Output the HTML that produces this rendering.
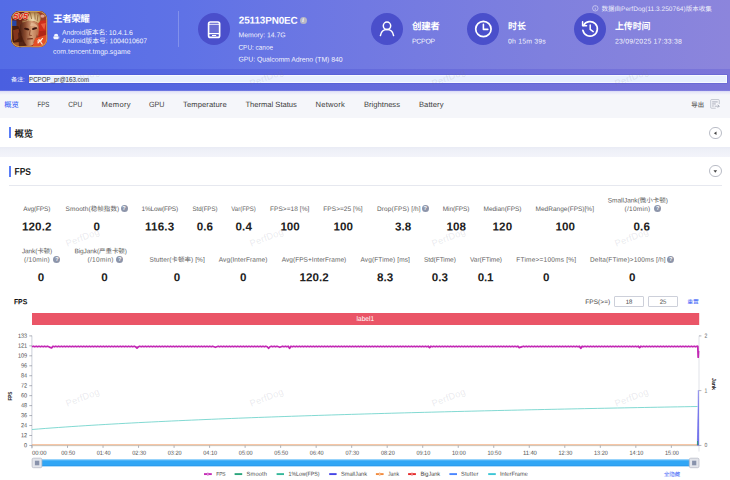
<!DOCTYPE html>
<html lang="zh-CN">
<head>
<meta charset="utf-8">
<title>PerfDog - 王者荣耀 性能报告</title>
<style>
*{box-sizing:border-box;margin:0;padding:0}
html,body{width:730px;height:480px;overflow:hidden;background:#fff}
body{position:relative;font-family:"Liberation Sans","Noto Sans CJK SC",sans-serif;-webkit-font-smoothing:antialiased}
.abs{position:absolute}
.t{position:absolute;white-space:nowrap;font-family:"Liberation Sans","Noto Sans CJK SC",sans-serif}
#hdr{left:0;top:0;width:730px;height:68.5px;background:linear-gradient(90deg,#546ce6 0%,#5f72e6 25%,#7179e2 50%,#7f80de 75%,#8c85dc 100%)}
#note{left:0;top:68.5px;width:730px;height:22px;background:linear-gradient(90deg,#4a5fe0 0%,#5466e0 25%,#646bdc 50%,#7070da 75%,#7b75d9 100%)}
#noteinput{left:28.6px;top:75px;width:698.4px;height:8.4px;background:#e8f0fe;border:.7px solid #f8faff;box-shadow:0 0 0 .5px rgba(70,80,205,.55)}
#tabs{left:0;top:90.5px;width:730px;height:27.3px;background:#f5f6fa}
#tabshadow{left:0;top:90.4px;width:730px;height:4.6px;background:linear-gradient(180deg,rgba(130,128,225,.5),rgba(180,180,240,.26) 35%,rgba(245,246,250,0))}
#card1{left:0;top:117.8px;width:730px;height:29.4px;background:#fff}
#gap{left:0;top:147.2px;width:730px;height:9.6px;background:linear-gradient(180deg,#e9ebf5 0%,#eff1f8 40%,#f3f4fa 100%)}
#card2{left:0;top:156.8px;width:730px;height:324px;background:#fff}
.bar{width:1.7px;height:11px;background:#587cf6;left:9.1px}
.circ{width:32px;height:32px;border-radius:50%;background:#4a4fcb}
.rbtn{width:12.6px;height:12.6px;border-radius:50%;border:.5px solid #b9bcc6;background:#fff;left:709.3px}
.q{width:7px;height:7px;border-radius:50%;background:#8d95aa;color:#fff;font-size:5.6px;line-height:7px;text-align:center;font-weight:700}
.inp{height:11.3px;width:29.7px;border:.6px solid #cdd0da;border-radius:1px;background:#fff;top:295.6px}
svg{position:absolute;overflow:visible}
</style>
</head>
<body>
<div class="abs" id="hdr"></div>
<div class="abs" id="note"></div>
<div class="abs" id="noteinput"></div>
<div class="abs" id="tabs"></div>
<div class="abs" id="tabshadow"></div>
<div class="abs" id="card1"></div>
<div class="abs" id="gap"></div>
<div class="abs" id="card2"></div>

<!-- game icon -->
<svg id="gameicon" style="left:11px;top:11px" width="36.3" height="36.3" viewBox="0 0 36 36">
  <defs>
    <clipPath id="gc"><rect x="0" y="0" width="36" height="36" rx="8.2"/></clipPath>
    <linearGradient id="gbg" x1="0" y1="0" x2="1" y2="1">
      <stop offset="0" stop-color="#5e2213"/><stop offset=".45" stop-color="#70301b"/><stop offset="1" stop-color="#c83d1d"/>
    </linearGradient>
    <linearGradient id="gface" x1="0" y1="0" x2="1" y2="0">
      <stop offset="0" stop-color="#4d2014"/><stop offset=".3" stop-color="#8e4e31"/><stop offset=".62" stop-color="#d6a079"/><stop offset="1" stop-color="#b56a46"/>
    </linearGradient>
    <radialGradient id="ghair" cx=".58" cy=".6" r=".62">
      <stop offset="0" stop-color="#f0dfb6"/><stop offset=".55" stop-color="#cfa870"/><stop offset="1" stop-color="#8c5e32"/>
    </radialGradient>
    <filter id="gblur" x="-20%" y="-20%" width="140%" height="140%"><feGaussianBlur stdDeviation=".55"/></filter>
  </defs>
  <g clip-path="url(#gc)">
    <rect width="36" height="36" fill="url(#gbg)"/>
    <g filter="url(#gblur)">
      <path d="M25 0 H36 V11 L27 12 Z" fill="#9c3e27"/>
      <ellipse cx="31.2" cy="5" rx="2.2" ry="1.6" fill="#dfa393"/>
      <path d="M26.5 10 L36 9 V24 L27 25 Z" fill="#cf2f1d"/>
      <path d="M29.5 13 L34.5 12 L33 18.5 Z" fill="#ea5d40"/>
      <path d="M28 20 L36 19 V25 L28 26 Z" fill="#b02617"/>
      <rect x="-1" y="8.4" width="6.4" height="6.4" fill="#2747a6"/>
      <path d="M-1 15 L7 15 L12 24 L10 37 L-1 37 Z" fill="#461a0c"/>
      <path d="M2 19 L7.5 17.5 L9.5 26 L3 30 Z" fill="#83351a"/>
      <path d="M1 31.5 L12 30.5 L14 36 L1 36 Z" fill="#a25626"/>
      <path d="M11.5 5 C13 -1 26 -2 29 4 C30 8 29 11 27 12.5 C23 8.5 16 9 12.5 14 C10.5 11 10.8 8 11.5 5 Z" fill="url(#ghair)"/>
      <path d="M14.5 3 L17 9.5 M19 1.5 L20.5 8 M23.5 1.5 L24 8.5 M26.6 4 L26 10" stroke="#8f6234" stroke-width=".8" fill="none"/>
      <path d="M9 14 C12 9 23 8 27 12.5 C28.5 18 27.5 25 24.5 30.5 C22.5 34.5 16.5 36 14 33.5 C10.5 29.5 8 20 9 14 Z" fill="url(#gface)"/>
      <path d="M20 12 C24 12 26.5 14 26.8 17 C24 15 21 14.5 19 15 Z" fill="#e6bc98" opacity=".75"/>
      <ellipse cx="15.6" cy="17.9" rx="2.7" ry="1.1" fill="#3a150c" transform="rotate(14 15.6 17.9)"/>
      <ellipse cx="23.4" cy="17.4" rx="2.7" ry="1.1" fill="#3a150c" transform="rotate(-16 23.4 17.4)"/>
      <path d="M19 19 L18.1 24 L20.6 24.4" stroke="#8a4629" stroke-width=".9" fill="none"/>
      <path d="M16 27.7 L21.6 27.4" stroke="#6a2a19" stroke-width="1" fill="none"/>
      <path d="M9.6 19 C10.6 26 13 31 15.5 34 L8 36 L7 22 Z" fill="#4a1c10" opacity=".85"/>
      <path d="M22 31 C23.5 29 25 26 25.6 23 L27.5 26 L24 33 Z" fill="#8a3a22" opacity=".7"/>
      <path d="M24 27 L37 23 V37 H21 Z" fill="#e44f28"/>
      <path d="M26.4 32 L31.6 27 M27.4 27.8 L31.2 33.2 M26 29.8 L30.4 29.4" stroke="#fff4e6" stroke-width="1.1" fill="none"/>
    </g>
    <path d="M0 0 H19 L15.6 9.4 H0 Z" fill="#741a10" opacity=".92"/>
    <text x="2.3" y="7.9" font-family="Liberation Sans, sans-serif" font-size="9" font-weight="700" font-style="italic" fill="#e3261a" stroke="#fff0c4" stroke-width=".85" paint-order="stroke" stroke-linejoin="round" letter-spacing="-.25">5v5</text>
    <rect x=".55" y=".55" width="34.9" height="34.9" rx="7.8" fill="none" stroke="#c99c50" stroke-width="1.1"/>
  </g>
</svg>

<!-- android glyph -->
<svg style="left:53.1px;top:32.8px" width="6.3" height="7.2" viewBox="0 0 16 16" preserveAspectRatio="none">
  <path d="M2.5 7 A5.5 5.5 0 0 1 13.5 7 Z M2.5 8 H13.5 V12.5 A1.2 1.2 0 0 1 12.3 13.7 H3.7 A1.2 1.2 0 0 1 2.5 12.5 Z M0.2 8 h1.6 v4.2 h-1.6 Z M14.2 8 h1.6 v4.2 h-1.6 Z" fill="#fff" opacity=".92"/>
</svg>
<div class="abs" style="left:177.6px;top:11px;width:.8px;height:36px;background:rgba(255,255,255,.22)"></div>

<!-- header circles -->
<div class="abs circ" style="left:197.5px;top:13px"></div>
<div class="abs circ" style="left:371px;top:13px"></div>
<div class="abs circ" style="left:466.8px;top:13px"></div>
<div class="abs circ" style="left:573.8px;top:13px"></div>
<svg style="left:197.5px;top:13px" width="32" height="32" viewBox="0 0 32 32" fill="none" stroke="#fff" stroke-width="1.5" stroke-linecap="round" stroke-linejoin="round">
  <rect x="10.6" y="9" width="11" height="15.4" rx="1.7" stroke-width="1.7"/>
  <rect x="11.6" y="11.6" width="9" height="8.6" fill="rgba(255,255,255,.18)" stroke="none"/>
  <path d="M10.8 11.3 H21.4 M10.8 20.6 H21.4" stroke-width="1.1"/>
  <path d="M14.4 22.5 H17.8" stroke-width="1"/>
</svg>
<svg style="left:371px;top:13px" width="32" height="32" viewBox="0 0 32 32" fill="none" stroke="#fff" stroke-width="1.5" stroke-linecap="round" stroke-linejoin="round">
  <circle cx="16" cy="12.8" r="3.7"/>
  <path d="M9.4 22.6 C10.2 18.2 13 16.6 16 16.6 C19 16.6 21.8 18.2 22.6 22.6"/>
</svg>
<svg style="left:466.8px;top:13px" width="32" height="32" viewBox="0 0 32 32" fill="none" stroke="#fff" stroke-width="1.5" stroke-linecap="round" stroke-linejoin="round">
  <circle cx="16.4" cy="16" r="7.7" stroke-width="1.7"/>
  <path d="M16.4 11.4 V16.4 H20.8" stroke-width="1.6"/>
</svg>
<svg style="left:573.8px;top:13px" width="32" height="32" viewBox="0 0 32 32" fill="none" stroke="#fff" stroke-width="1.5" stroke-linecap="round" stroke-linejoin="round">
  <path d="M9.6 12.4 A7.3 7.3 0 1 1 8.9 17.4" stroke-width="1.7"/>
  <path d="M8.6 8.8 V12.8 H12.6"/>
  <path d="M16.2 12 V16.4 L19.2 18.6"/>
</svg>
<!-- info icons -->
<div class="abs q" style="left:299.6px;top:16.9px;width:7px;height:7px;line-height:7px;font-size:5.6px;background:#b7b8c6;font-style:italic;font-family:'Liberation Serif',serif">i</div>
<svg style="left:592.2px;top:5.1px" width="6.6" height="6.6" viewBox="0 0 12 12" fill="none" stroke="rgba(255,255,255,.85)" stroke-width="1">
  <circle cx="6" cy="6" r="5"/><path d="M6 5.2 V9 M6 3 V3.9"/>
</svg>

<!-- export icon -->
<svg style="left:709.8px;top:99px" width="10.2" height="9.8" viewBox="0 0 20 19" fill="none" stroke="#a9aebb" stroke-width="1.3" stroke-linecap="round" stroke-linejoin="round">
  <path d="M10.5 18 H3 A1.6 1.6 0 0 1 1.4 16.4 V2.6 A1.6 1.6 0 0 1 3 1 H16.6 A1.6 1.6 0 0 1 18.2 2.6 V9"/>
  <path d="M5 5.6 H14.4 M5 9.6 H10.6 M5 13.6 H6.6" stroke="#7b8192" stroke-width="1.2"/>
  <path d="M10 14 H17.6 M15.6 11.6 L18 14 L15.6 16.4" stroke="#8a90a0" stroke-width="1.2"/>
</svg>

<!-- section titles -->
<div class="abs bar" style="top:127.2px"></div>
<div class="abs bar" style="top:165.6px"></div>
<div class="abs rbtn" style="top:126.5px"></div>
<div class="abs rbtn" style="top:164.6px"></div>
<svg style="left:709.3px;top:126.5px" width="12.6" height="12.6" viewBox="0 0 12.6 12.6"><path d="M7.5 4.5 V8.1 L4.9 6.3 Z" fill="#444"/></svg>
<svg style="left:709.3px;top:164.6px" width="12.6" height="12.6" viewBox="0 0 12.6 12.6"><path d="M4.5 5.2 H8.1 L6.3 7.8 Z" fill="#444"/></svg>
<div class="abs" style="left:9px;top:185.1px;width:713px;height:.7px;background:#e6e8ef"></div>

<!-- help icons -->
<div class="abs q" style="left:120.5px;top:205px">?</div>
<div class="abs q" style="left:421.8px;top:205px">?</div>
<div class="abs q" style="left:654.2px;top:204.9px">?</div>
<div class="abs q" style="left:53.4px;top:255.9px">?</div>
<div class="abs q" style="left:116.3px;top:255.9px">?</div>
<div class="abs q" style="left:667.3px;top:255.9px">?</div>

<!-- FPS threshold inputs -->
<div class="abs inp" style="left:614.1px"></div>
<div class="abs inp" style="left:648px"></div>

<!-- chart -->
<svg id="chart" style="left:0;top:0" width="730" height="480" viewBox="0 0 730 480">
  <rect x="32" y="313" width="667.2" height="12" fill="#ea5567"/>
  <!-- axes -->
  <g stroke="#ccd0da" stroke-width=".6" fill="none">
    <path d="M31.9 335.7 V448.6" stroke-width="1"/>
    <path d="M699 335.7 V451.5"/>
    <path d="M32 445.65 H699" stroke="#9aa39f" stroke-width=".6"/>
  </g>
  <g stroke="#7c818e" stroke-width=".6" fill="none" id="ticks"><path d="M29.3 445.45 H32 M29.3 435.49 H32 M29.3 425.53 H32 M29.3 415.57 H32 M29.3 405.61 H32 M29.3 395.65 H32 M29.3 385.69 H32 M29.3 375.73 H32 M29.3 365.77 H32 M29.3 355.81 H32 M29.3 345.85 H32 M29.3 335.89 H32 M32.00 445.6 V447.9 M67.52 445.6 V447.9 M103.04 445.6 V447.9 M138.56 445.6 V447.9 M174.08 445.6 V447.9 M209.60 445.6 V447.9 M245.12 445.6 V447.9 M280.64 445.6 V447.9 M316.16 445.6 V447.9 M351.68 445.6 V447.9 M387.20 445.6 V447.9 M422.72 445.6 V447.9 M458.24 445.6 V447.9 M493.76 445.6 V447.9 M529.28 445.6 V447.9 M564.80 445.6 V447.9 M600.32 445.6 V447.9 M635.84 445.6 V447.9 M671.36 445.6 V447.9 M699 335.90 H701.4 M699 390.60 H701.4 M699 445.45 H701.4"/></g>
  <!-- series -->
  <path id="low" d="M32.0 429.50 L38.7 428.97 L45.3 428.45 L52.0 427.95 L58.6 427.47 L65.3 427.01 L71.9 426.55 L78.6 426.11 L85.2 425.69 L91.9 425.27 L98.5 424.87 L105.2 424.47 L111.9 424.09 L118.5 423.71 L125.2 423.35 L131.8 422.99 L138.5 422.64 L145.1 422.30 L151.8 421.97 L158.4 421.65 L165.1 421.33 L171.8 421.01 L178.4 420.71 L185.1 420.41 L191.7 420.11 L198.4 419.83 L205.0 419.54 L211.7 419.27 L218.3 418.99 L225.0 418.73 L231.7 418.46 L238.3 418.20 L245.0 417.95 L251.6 417.70 L258.3 417.45 L264.9 417.21 L271.6 416.97 L278.2 416.74 L284.9 416.51 L291.5 416.28 L298.2 416.06 L304.9 415.84 L311.5 415.62 L318.2 415.40 L324.8 415.19 L331.5 414.98 L338.1 414.78 L344.8 414.57 L351.4 414.37 L358.1 414.18 L364.8 413.98 L371.4 413.79 L378.1 413.60 L384.7 413.41 L391.4 413.23 L398.0 413.04 L404.7 412.86 L411.3 412.68 L418.0 412.51 L424.6 412.33 L431.3 412.16 L438.0 411.99 L444.6 411.82 L451.3 411.65 L457.9 411.49 L464.6 411.32 L471.2 411.16 L477.9 411.00 L484.5 410.84 L491.2 410.69 L497.8 410.53 L504.5 410.38 L511.2 410.23 L517.8 410.08 L524.5 409.93 L531.1 409.78 L537.8 409.64 L544.4 409.49 L551.1 409.35 L557.7 409.21 L564.4 409.07 L571.1 408.93 L577.7 408.79 L584.4 408.65 L591.0 408.52 L597.7 408.38 L604.3 408.25 L611.0 408.12 L617.6 407.99 L624.3 407.86 L631.0 407.73 L637.6 407.60 L644.3 407.47 L650.9 407.35 L657.6 407.22 L664.2 407.10 L670.9 406.98 L677.5 406.86 L684.2 406.74 L690.8 406.62 L697.5 406.50" fill="none" stroke="#62cfc6" stroke-width=".8"/>
  <path d="M32 444.75 H698.6" stroke="#f29a62" stroke-width=".75" fill="none"/>
  <path d="M698.35 390.2 L697.3 445.3 L698.7 445.3 Z" fill="#4a4ae8" stroke="#4a4ae8" stroke-width=".35" stroke-linejoin="round"/>
  <path d="M697.4 445 L697.6 441 L697.9 445" stroke="#2a9d6f" stroke-width=".7" fill="none"/>
  <path id="fps" d="M32.0 346.75 L33.4 346.25 L34.8 346.75 L36.2 346.25 L37.6 346.75 L39.0 346.25 L40.4 346.75 L41.8 346.25 L43.2 346.75 L44.6 346.25 L46.0 346.75 L47.4 346.25 L48.8 346.75 L50.2 347.45 L51.6 347.95 L53.0 346.25 L54.4 346.75 L55.8 346.25 L57.2 346.75 L58.6 346.25 L60.0 346.75 L61.4 346.25 L62.8 346.75 L64.2 346.25 L65.6 346.75 L67.0 346.25 L68.4 346.75 L69.8 346.25 L71.2 346.75 L72.6 346.25 L74.0 346.75 L75.4 346.25 L76.8 346.75 L78.2 346.25 L79.6 346.75 L81.0 346.25 L82.4 346.75 L83.8 346.25 L85.2 346.75 L86.6 346.25 L88.0 346.75 L89.4 346.25 L90.8 346.75 L92.2 346.25 L93.6 346.75 L95.0 346.25 L96.4 346.75 L97.8 346.25 L99.2 346.75 L100.6 346.25 L102.0 346.75 L103.4 346.25 L104.8 346.75 L106.2 346.25 L107.6 346.75 L109.0 346.25 L110.4 346.75 L111.8 346.25 L113.2 346.75 L114.6 346.25 L116.0 346.75 L117.4 346.25 L118.8 346.75 L120.2 346.25 L121.6 346.75 L123.0 346.25 L124.4 346.75 L125.8 346.25 L127.2 346.75 L128.6 346.25 L130.0 346.75 L131.4 346.25 L132.8 346.75 L134.2 346.25 L135.6 346.75 L137.0 348.05 L138.4 346.75 L139.8 346.25 L141.2 346.75 L142.6 346.25 L144.0 346.75 L145.4 346.25 L146.8 346.75 L148.2 346.25 L149.6 346.75 L151.0 346.25 L152.4 346.75 L153.8 346.25 L155.2 346.75 L156.6 346.25 L158.0 346.75 L159.4 346.25 L160.8 346.75 L162.2 346.25 L163.6 346.75 L165.0 346.25 L166.4 346.75 L167.8 346.25 L169.2 346.75 L170.6 346.25 L172.0 346.75 L173.4 346.25 L174.8 346.75 L176.2 346.25 L177.6 346.75 L179.0 346.25 L180.4 346.75 L181.8 346.25 L183.2 346.75 L184.6 346.25 L186.0 346.75 L187.4 346.25 L188.8 346.75 L190.2 346.25 L191.6 346.75 L193.0 346.25 L194.4 346.75 L195.8 346.25 L197.2 346.75 L198.6 346.25 L200.0 346.75 L201.4 346.25 L202.8 346.75 L204.2 346.25 L205.6 346.75 L207.0 346.25 L208.4 346.75 L209.8 346.25 L211.2 346.75 L212.6 346.25 L214.0 346.75 L215.4 347.25 L216.8 346.75 L218.2 346.25 L219.6 346.75 L221.0 346.25 L222.4 346.75 L223.8 346.25 L225.2 346.75 L226.6 346.25 L228.0 346.75 L229.4 346.25 L230.8 346.75 L232.2 346.25 L233.6 346.75 L235.0 346.25 L236.4 346.75 L237.8 346.25 L239.2 346.75 L240.6 346.25 L242.0 346.75 L243.4 346.25 L244.8 346.75 L246.2 346.25 L247.6 346.75 L249.0 346.25 L250.4 346.75 L251.8 346.25 L253.2 346.75 L254.6 346.25 L256.0 346.75 L257.4 346.25 L258.8 346.75 L260.2 346.25 L261.6 346.75 L263.0 346.25 L264.4 346.75 L265.8 346.25 L267.2 346.75 L268.6 348.25 L270.0 346.75 L271.4 346.25 L272.8 346.75 L274.2 346.25 L275.6 346.75 L277.0 346.25 L278.4 346.75 L279.8 347.25 L281.2 346.75 L282.6 346.25 L284.0 346.75 L285.4 346.25 L286.8 346.75 L288.2 346.25 L289.6 348.25 L291.0 346.25 L292.4 346.75 L293.8 346.25 L295.2 346.75 L296.6 346.25 L298.0 346.75 L299.4 346.25 L300.8 346.75 L302.2 346.25 L303.6 346.75 L305.0 346.25 L306.4 346.75 L307.8 346.25 L309.2 346.75 L310.6 346.25 L312.0 346.75 L313.4 346.25 L314.8 346.75 L316.2 346.25 L317.6 346.75 L319.0 346.25 L320.4 346.75 L321.8 346.25 L323.2 346.75 L324.6 346.25 L326.0 346.75 L327.4 346.25 L328.8 346.75 L330.2 346.25 L331.6 346.75 L333.0 346.25 L334.4 346.75 L335.8 346.25 L337.2 346.75 L338.6 346.25 L340.0 346.75 L341.4 346.25 L342.8 346.75 L344.2 346.25 L345.6 346.75 L347.0 346.25 L348.4 346.75 L349.8 346.25 L351.2 346.75 L352.6 346.25 L354.0 346.75 L355.4 346.25 L356.8 346.75 L358.2 346.25 L359.6 346.75 L361.0 346.25 L362.4 346.75 L363.8 346.25 L365.2 346.75 L366.6 346.25 L368.0 346.75 L369.4 346.25 L370.8 346.75 L372.2 346.25 L373.6 346.75 L375.0 346.25 L376.4 346.75 L377.8 346.25 L379.2 346.75 L380.6 346.25 L382.0 346.75 L383.4 346.25 L384.8 346.75 L386.2 346.25 L387.6 346.75 L389.0 346.25 L390.4 346.75 L391.8 346.25 L393.2 346.75 L394.6 346.25 L396.0 346.75 L397.4 346.25 L398.8 346.75 L400.2 346.25 L401.6 346.75 L403.0 346.25 L404.4 346.75 L405.8 346.25 L407.2 346.75 L408.6 346.25 L410.0 346.75 L411.4 346.25 L412.8 346.75 L414.2 346.25 L415.6 346.75 L417.0 346.25 L418.4 346.75 L419.8 346.25 L421.2 346.75 L422.6 346.25 L424.0 346.75 L425.4 346.25 L426.8 346.75 L428.2 346.25 L429.6 347.55 L431.0 346.25 L432.4 346.75 L433.8 346.25 L435.2 346.75 L436.6 346.25 L438.0 346.75 L439.4 346.25 L440.8 346.75 L442.2 346.25 L443.6 346.75 L445.0 346.25 L446.4 346.75 L447.8 346.25 L449.2 346.75 L450.6 346.25 L452.0 346.75 L453.4 346.25 L454.8 346.75 L456.2 346.25 L457.6 346.75 L459.0 346.25 L460.4 346.75 L461.8 346.25 L463.2 346.75 L464.6 346.25 L466.0 346.75 L467.4 346.25 L468.8 346.75 L470.2 346.25 L471.6 346.75 L473.0 346.25 L474.4 346.75 L475.8 346.25 L477.2 346.75 L478.6 346.25 L480.0 346.75 L481.4 346.25 L482.8 346.75 L484.2 346.25 L485.6 346.75 L487.0 346.25 L488.4 346.75 L489.8 346.25 L491.2 346.75 L492.6 346.25 L494.0 346.75 L495.4 346.25 L496.8 346.75 L498.2 346.25 L499.6 346.75 L501.0 346.25 L502.4 346.75 L503.8 346.25 L505.2 346.75 L506.6 346.25 L508.0 346.75 L509.4 346.25 L510.8 346.75 L512.2 346.25 L513.6 346.75 L515.0 346.25 L516.4 346.75 L517.8 346.25 L519.2 347.55 L520.6 347.05 L522.0 346.75 L523.4 346.25 L524.8 346.75 L526.2 346.25 L527.6 346.75 L529.0 346.25 L530.4 346.75 L531.8 346.25 L533.2 346.75 L534.6 346.25 L536.0 346.75 L537.4 346.25 L538.8 346.75 L540.2 346.25 L541.6 346.75 L543.0 346.25 L544.4 346.75 L545.8 346.25 L547.2 346.75 L548.6 346.25 L550.0 346.75 L551.4 346.25 L552.8 346.75 L554.2 346.25 L555.6 346.75 L557.0 346.25 L558.4 346.75 L559.8 346.25 L561.2 346.75 L562.6 346.25 L564.0 346.75 L565.4 346.25 L566.8 346.75 L568.2 346.25 L569.6 346.75 L571.0 346.25 L572.4 346.75 L573.8 346.25 L575.2 346.75 L576.6 346.25 L578.0 346.75 L579.4 346.25 L580.8 348.35 L582.2 346.25 L583.6 346.75 L585.0 346.25 L586.4 346.75 L587.8 346.25 L589.2 346.75 L590.6 346.25 L592.0 346.75 L593.4 346.25 L594.8 346.75 L596.2 346.25 L597.6 346.75 L599.0 346.25 L600.4 346.75 L601.8 346.25 L603.2 346.75 L604.6 346.25 L606.0 346.75 L607.4 346.25 L608.8 346.75 L610.2 346.25 L611.6 346.75 L613.0 346.25 L614.4 346.75 L615.8 346.25 L617.2 346.75 L618.6 346.25 L620.0 346.75 L621.4 346.25 L622.8 346.75 L624.2 346.25 L625.6 346.75 L627.0 346.25 L628.4 346.75 L629.8 346.25 L631.2 346.75 L632.6 346.25 L634.0 346.75 L635.4 346.25 L636.8 346.75 L638.2 346.25 L639.6 347.55 L641.0 346.25 L642.4 346.75 L643.8 346.25 L645.2 346.75 L646.6 346.25 L648.0 346.75 L649.4 346.25 L650.8 346.75 L652.2 346.25 L653.6 346.75 L655.0 346.25 L656.4 346.75 L657.8 346.25 L659.2 346.75 L660.6 346.25 L662.0 346.75 L663.4 346.25 L664.8 346.75 L666.2 346.25 L667.6 346.75 L669.0 346.25 L670.4 346.75 L671.8 346.25 L673.2 346.75 L674.6 346.25 L676.0 346.75 L677.4 346.25 L678.8 346.75 L680.2 346.25 L681.6 346.75 L683.0 346.25 L684.4 346.75 L685.8 346.25 L687.2 346.75 L688.6 346.25 L690.0 346.75 L691.4 346.25 L692.8 346.75 L694.2 346.25 L695.6 346.75 L697.0 346.25 L697.8 346.4 L698.2 357.2 L698.5 351" fill="none" stroke="#c227b4" stroke-width="1.8" stroke-linejoin="round"/>
  <!-- slider -->
  <rect x="36" y="459.65" width="658" height="6.55" fill="#31a6f5"/>
  <rect x="36" y="459.65" width="658" height="1" fill="#5fbcf8"/>
  <rect x="36" y="465.4" width="658" height=".8" fill="#2a97ea"/>
  <g>
    <rect x="32.1" y="458.2" width="9.8" height="9.5" rx="1.4" fill="#e3e5eb" stroke="#b1b5c1" stroke-width=".7"/>
    <rect x="34.9" y="460.7" width="4.4" height="4.6" fill="#8892ab"/>
    <rect x="689.3" y="458.2" width="9.7" height="9.5" rx="1.4" fill="#e3e5eb" stroke="#b1b5c1" stroke-width=".7"/>
    <rect x="692.1" y="460.7" width="4.2" height="4.6" fill="#8892ab"/>
  </g>
  <!-- legend markers -->
  <g stroke-width="1.9" stroke-linecap="butt" fill="#fff">
    <path d="M204 474.1 H211.8" stroke="#c42bb6"/><circle cx="207.9" cy="474.1" r="1.05" stroke="#c42bb6" stroke-width=".75"/>
    <path d="M234.6 474.1 H242.2" stroke="#2aa57c"/>
    <path d="M276.6 474.1 H284" stroke="#34b79a"/>
    <path d="M329.2 474.1 H336.6" stroke="#4545e6"/>
    <path d="M375.9 474.1 H383.6" stroke="#f28a3c"/><circle cx="379.75" cy="474.1" r="1.05" stroke="#f28a3c" stroke-width=".75"/>
    <path d="M408.1 474.1 H415.9" stroke="#e52a2a"/><circle cx="412" cy="474.1" r="1.05" stroke="#e52a2a" stroke-width=".75"/>
    <path d="M449.4 474.1 H457" stroke="#4a86ff"/>
    <path d="M488.2 474.1 H495.8" stroke="#3cc6d6"/>
  </g>
</svg>

<span class="t" id="t0" style="left:53px;top:11px;font-size:9.5px;line-height:13px;color:#fff;font-weight:700;letter-spacing:-0.454px;transform:translate(0.10px,0.92px) rotate(0.12deg)">王者荣耀</span>
<span class="t" id="t1" style="left:62px;top:27px;font-size:6.9px;line-height:9px;color:rgba(255,255,255,.94);letter-spacing:-0.133px;transform:translate(0.10px,0.87px) rotate(0.12deg)">Android版本名: 10.4.1.6</span>
<span class="t" id="t2" style="left:62px;top:36px;font-size:6.9px;line-height:9px;color:rgba(255,255,255,.94);letter-spacing:-0.076px;transform:translate(0.10px,0.17px) rotate(0.12deg)">Android版本号: 1004010607</span>
<span class="t" id="t3" style="left:53px;top:46px;font-size:6.9px;line-height:9px;color:rgba(255,255,255,.94);letter-spacing:0.010px;transform:translate(0.00px,0.87px) rotate(0.12deg)">com.tencent.tmgp.sgame</span>
<span class="t" id="t4" style="left:10px;top:74px;font-size:6.2px;line-height:9px;color:rgba(255,255,255,.94);letter-spacing:-0.103px;transform:translate(0.90px,0.84px) rotate(0.12deg)">备注:</span>
<span class="t" id="t5" style="left:29px;top:74px;font-size:6.9px;line-height:9px;color:#333;transform-origin:0 50%;transform:translate(0.10px,0.77px) rotate(0.12deg) scaleX(0.889)">PCPOP_pr@163.com</span>
<span class="t" id="t6" style="left:238px;top:13px;font-size:9.9px;line-height:13px;color:#fff;font-weight:700;letter-spacing:-0.104px;transform:translate(0.80px,0.64px) rotate(0.12deg)">25113PN0EC</span>
<span class="t" id="t7" style="left:238px;top:30px;font-size:6.9px;line-height:9px;color:rgba(255,255,255,.94);letter-spacing:-0.037px;transform:translate(0.50px,0.21px) rotate(0.12deg)">Memory: 14.7G</span>
<span class="t" id="t8" style="left:238px;top:42px;font-size:6.9px;line-height:9px;color:rgba(255,255,255,.94);transform-origin:0 50%;transform:translate(0.50px,0.67px) rotate(0.12deg) scaleX(0.929)">CPU: canoe</span>
<span class="t" id="t9" style="left:238px;top:54px;font-size:6.9px;line-height:9px;color:rgba(255,255,255,.94);letter-spacing:-0.059px;transform:translate(0.50px,0.67px) rotate(0.12deg)">GPU: Qualcomm Adreno (TM) 840</span>
<span class="t" id="t10" style="left:412px;top:19px;font-size:9.5px;line-height:13px;color:#fff;font-weight:700;letter-spacing:-0.339px;transform:translate(0.00px,0.47px) rotate(0.12deg)">创建者</span>
<span class="t" id="t11" style="left:412px;top:36px;font-size:6.9px;line-height:9px;color:rgba(255,255,255,.94);letter-spacing:-0.225px;transform:translate(0.00px,0.57px) rotate(0.12deg)">PCPOP</span>
<span class="t" id="t12" style="left:508px;top:19px;font-size:9.5px;line-height:13px;color:#fff;font-weight:700;transform-origin:0 50%;transform:translate(0.00px,0.47px) rotate(0.12deg) scaleX(0.947)">时长</span>
<span class="t" id="t13" style="left:508px;top:36px;font-size:6.9px;line-height:9px;color:rgba(255,255,255,.94);letter-spacing:0.198px;transform:translate(0.00px,0.57px) rotate(0.12deg)">0h 15m 39s</span>
<span class="t" id="t14" style="left:615px;top:19px;font-size:9.5px;line-height:13px;color:#fff;font-weight:700;transform-origin:0 50%;transform:translate(0.00px,0.47px) rotate(0.12deg) scaleX(0.934)">上传时间</span>
<span class="t" id="t15" style="left:615px;top:36px;font-size:6.9px;line-height:9px;color:rgba(255,255,255,.94);letter-spacing:0.198px;transform:translate(0.00px,0.57px) rotate(0.12deg)">23/09/2025 17:33:38</span>
<span class="t" id="t16" style="left:601px;top:4px;font-size:6.5px;line-height:9px;color:rgba(255,255,255,.86);letter-spacing:0.035px;transform:translate(0.50px,0.03px) rotate(0.12deg)">数据由PerfDog(11.3.250764)版本收集</span>
<span class="t" id="t17" style="left:4px;top:99px;font-size:7.3px;line-height:11px;color:#4a6cf7;font-weight:500;letter-spacing:0.003px;transform:translate(0.30px,0.32px) rotate(0.12deg)">概览</span>
<span class="t" id="t18" style="left:37px;top:99px;font-size:7.6px;line-height:11px;color:#3d3d3d;transform-origin:0 50%;transform:translate(0.50px,0.02px) rotate(0.12deg) scaleX(0.798)">FPS</span>
<span class="t" id="t19" style="left:68px;top:99px;font-size:7.6px;line-height:11px;color:#3d3d3d;transform-origin:0 50%;transform:translate(0.30px,0.02px) rotate(0.12deg) scaleX(0.866)">CPU</span>
<span class="t" id="t20" style="left:101px;top:99px;font-size:7.6px;line-height:11px;color:#3d3d3d;letter-spacing:0.344px;transform:translate(0.50px,0.02px) rotate(0.12deg)">Memory</span>
<span class="t" id="t21" style="left:149px;top:99px;font-size:7.6px;line-height:11px;color:#3d3d3d;transform-origin:0 50%;transform:translate(0.00px,0.02px) rotate(0.12deg) scaleX(0.941)">GPU</span>
<span class="t" id="t22" style="left:183px;top:99px;font-size:7.6px;line-height:11px;color:#3d3d3d;letter-spacing:0.105px;transform:translate(0.00px,0.02px) rotate(0.12deg)">Temperature</span>
<span class="t" id="t23" style="left:245px;top:99px;font-size:7.6px;line-height:11px;color:#3d3d3d;letter-spacing:-0.014px;transform:translate(0.50px,0.02px) rotate(0.12deg)">Thermal Status</span>
<span class="t" id="t24" style="left:315px;top:99px;font-size:7.6px;line-height:11px;color:#3d3d3d;letter-spacing:0.234px;transform:translate(0.50px,0.02px) rotate(0.12deg)">Network</span>
<span class="t" id="t25" style="left:364px;top:99px;font-size:7.6px;line-height:11px;color:#3d3d3d;letter-spacing:0.011px;transform:translate(0.00px,0.02px) rotate(0.12deg)">Brightness</span>
<span class="t" id="t26" style="left:419px;top:99px;font-size:7.6px;line-height:11px;color:#3d3d3d;letter-spacing:0.062px;transform:translate(0.00px,0.02px) rotate(0.12deg)">Battery</span>
<span class="t" id="t27" style="left:691px;top:100px;font-size:6.4px;line-height:9px;color:#666;font-weight:500;letter-spacing:0.009px;transform:translate(0.30px,0.07px) rotate(0.12deg)">导出</span>
<span class="t" id="t28" style="left:14px;top:126px;font-size:9.4px;line-height:13px;color:#222;font-weight:700;letter-spacing:-0.083px;transform:translate(0.40px,0.93px) rotate(0.12deg)">概览</span>
<span class="t" id="t29" style="left:14px;top:164px;font-size:9.8px;line-height:13px;color:#222;font-weight:700;transform-origin:0 50%;transform:translate(0.50px,0.86px) rotate(0.12deg) scaleX(0.860)">FPS</span>
<span class="t" id="t30" style="left:23px;top:203px;font-size:6.5px;line-height:9px;color:#5c5c5c;letter-spacing:-0.133px;transform:translate(0.30px,0.98px) rotate(0.12deg)">Avg(FPS)</span>
<span class="t" id="t31" style="left:65px;top:203px;font-size:6.5px;line-height:9px;color:#5c5c5c;letter-spacing:0.089px;transform:translate(0.50px,0.98px) rotate(0.12deg)">Smooth(稳帧指数)</span>
<span class="t" id="t32" style="left:141px;top:203px;font-size:6.5px;line-height:9px;color:#5c5c5c;letter-spacing:-0.180px;transform:translate(0.50px,0.98px) rotate(0.12deg)">1%Low(FPS)</span>
<span class="t" id="t33" style="left:192px;top:203px;font-size:6.5px;line-height:9px;color:#5c5c5c;transform-origin:0 50%;transform:translate(0.50px,0.98px) rotate(0.12deg) scaleX(0.935)">Std(FPS)</span>
<span class="t" id="t34" style="left:231px;top:203px;font-size:6.5px;line-height:9px;color:#5c5c5c;transform-origin:0 50%;transform:translate(0.30px,0.98px) rotate(0.12deg) scaleX(0.921)">Var(FPS)</span>
<span class="t" id="t35" style="left:270px;top:203px;font-size:6.5px;line-height:9px;color:#5c5c5c;letter-spacing:0.075px;transform:translate(0.00px,0.98px) rotate(0.12deg)">FPS&gt;=18 [%]</span>
<span class="t" id="t36" style="left:323px;top:203px;font-size:6.5px;line-height:9px;color:#5c5c5c;letter-spacing:0.066px;transform:translate(0.30px,0.98px) rotate(0.12deg)">FPS&gt;=25 [%]</span>
<span class="t" id="t37" style="left:377px;top:203px;font-size:6.5px;line-height:9px;color:#5c5c5c;letter-spacing:0.135px;transform:translate(0.00px,0.98px) rotate(0.12deg)">Drop(FPS) [/h]</span>
<span class="t" id="t38" style="left:442px;top:203px;font-size:6.5px;line-height:9px;color:#5c5c5c;letter-spacing:-0.119px;transform:translate(0.80px,0.98px) rotate(0.12deg)">Min(FPS)</span>
<span class="t" id="t39" style="left:483px;top:203px;font-size:6.5px;line-height:9px;color:#5c5c5c;letter-spacing:-0.027px;transform:translate(0.50px,0.98px) rotate(0.12deg)">Median(FPS)</span>
<span class="t" id="t40" style="left:535px;top:203px;font-size:6.5px;line-height:9px;color:#5c5c5c;letter-spacing:0.021px;transform:translate(0.50px,0.98px) rotate(0.12deg)">MedRange(FPS)[%]</span>
<span class="t" id="t41" style="left:607px;top:195px;font-size:6.5px;line-height:9px;color:#5c5c5c;letter-spacing:-0.021px;transform:translate(0.80px,0.58px) rotate(0.12deg)">SmallJank(微小卡顿)</span>
<span class="t" id="t42" style="left:624px;top:203px;font-size:6.5px;line-height:9px;color:#5c5c5c;letter-spacing:0.270px;transform:translate(0.50px,0.98px) rotate(0.12deg)">(/10min)</span>
<span class="t" id="t43" style="left:22px;top:219px;font-size:11.6px;line-height:14px;color:#222;font-weight:700;letter-spacing:0.097px;transform:translate(0.00px,0.60px) rotate(0.12deg)">120.2</span>
<span class="t" id="t44" style="left:93px;top:219px;font-size:11.6px;line-height:14px;color:#222;font-weight:700;letter-spacing:-0.153px;transform:translate(0.50px,0.60px) rotate(0.12deg)">0</span>
<span class="t" id="t45" style="left:145px;top:219px;font-size:11.6px;line-height:14px;color:#222;font-weight:700;letter-spacing:0.225px;transform:translate(0.00px,0.60px) rotate(0.12deg)">116.3</span>
<span class="t" id="t46" style="left:196px;top:219px;font-size:11.6px;line-height:14px;color:#222;font-weight:700;letter-spacing:0.025px;transform:translate(0.80px,0.60px) rotate(0.12deg)">0.6</span>
<span class="t" id="t47" style="left:235px;top:219px;font-size:11.6px;line-height:14px;color:#222;font-weight:700;letter-spacing:0.125px;transform:translate(0.50px,0.60px) rotate(0.12deg)">0.4</span>
<span class="t" id="t48" style="left:280px;top:219px;font-size:11.6px;line-height:14px;color:#222;font-weight:700;letter-spacing:-0.115px;transform:translate(0.50px,0.60px) rotate(0.12deg)">100</span>
<span class="t" id="t49" style="left:333px;top:219px;font-size:11.6px;line-height:14px;color:#222;font-weight:700;letter-spacing:0.052px;transform:translate(0.50px,0.60px) rotate(0.12deg)">100</span>
<span class="t" id="t50" style="left:395px;top:219px;font-size:11.6px;line-height:14px;color:#222;font-weight:700;letter-spacing:0.058px;transform:translate(0.00px,0.60px) rotate(0.12deg)">3.8</span>
<span class="t" id="t51" style="left:446px;top:219px;font-size:11.6px;line-height:14px;color:#222;font-weight:700;letter-spacing:0.052px;transform:translate(0.50px,0.60px) rotate(0.12deg)">108</span>
<span class="t" id="t52" style="left:492px;top:219px;font-size:11.6px;line-height:14px;color:#222;font-weight:700;letter-spacing:0.152px;transform:translate(0.50px,0.60px) rotate(0.12deg)">120</span>
<span class="t" id="t53" style="left:555px;top:219px;font-size:11.6px;line-height:14px;color:#222;font-weight:700;letter-spacing:0.052px;transform:translate(0.50px,0.60px) rotate(0.12deg)">100</span>
<span class="t" id="t54" style="left:633px;top:219px;font-size:11.6px;line-height:14px;color:#222;font-weight:700;letter-spacing:0.125px;transform:translate(0.50px,0.60px) rotate(0.12deg)">0.6</span>
<span class="t" id="t55" style="left:22px;top:246px;font-size:6.5px;line-height:9px;color:#5c5c5c;letter-spacing:-0.133px;transform:translate(0.00px,0.33px) rotate(0.12deg)">Jank(卡顿)</span>
<span class="t" id="t56" style="left:24px;top:254px;font-size:6.5px;line-height:9px;color:#5c5c5c;letter-spacing:0.270px;transform:translate(0.00px,0.78px) rotate(0.12deg)">(/10min)</span>
<span class="t" id="t57" style="left:74px;top:246px;font-size:6.5px;line-height:9px;color:#5c5c5c;letter-spacing:-0.090px;transform:translate(0.50px,0.33px) rotate(0.12deg)">BigJank(严重卡顿)</span>
<span class="t" id="t58" style="left:87px;top:254px;font-size:6.5px;line-height:9px;color:#5c5c5c;letter-spacing:0.307px;transform:translate(0.50px,0.78px) rotate(0.12deg)">(/10min)</span>
<span class="t" id="t59" style="left:149px;top:254px;font-size:6.5px;line-height:9px;color:#5c5c5c;letter-spacing:0.070px;transform:translate(0.50px,0.78px) rotate(0.12deg)">Stutter(卡顿率) [%]</span>
<span class="t" id="t60" style="left:218px;top:254px;font-size:6.5px;line-height:9px;color:#5c5c5c;letter-spacing:0.100px;transform:translate(0.80px,0.78px) rotate(0.12deg)">Avg(InterFrame)</span>
<span class="t" id="t61" style="left:281px;top:254px;font-size:6.5px;line-height:9px;color:#5c5c5c;letter-spacing:0.045px;transform:translate(0.80px,0.78px) rotate(0.12deg)">Avg(FPS+InterFrame)</span>
<span class="t" id="t62" style="left:360px;top:254px;font-size:6.5px;line-height:9px;color:#5c5c5c;letter-spacing:0.122px;transform:translate(0.50px,0.78px) rotate(0.12deg)">Avg(FTime) [ms]</span>
<span class="t" id="t63" style="left:424px;top:254px;font-size:6.5px;line-height:9px;color:#5c5c5c;letter-spacing:-0.047px;transform:translate(0.00px,0.78px) rotate(0.12deg)">Std(FTime)</span>
<span class="t" id="t64" style="left:470px;top:254px;font-size:6.5px;line-height:9px;color:#5c5c5c;letter-spacing:-0.014px;transform:translate(0.00px,0.78px) rotate(0.12deg)">Var(FTime)</span>
<span class="t" id="t65" style="left:516px;top:254px;font-size:6.5px;line-height:9px;color:#5c5c5c;letter-spacing:0.220px;transform:translate(0.30px,0.78px) rotate(0.12deg)">FTime&gt;=100ms [%]</span>
<span class="t" id="t66" style="left:590px;top:254px;font-size:6.5px;line-height:9px;color:#5c5c5c;letter-spacing:0.173px;transform:translate(0.00px,0.78px) rotate(0.12deg)">Delta(FTime)&gt;100ms [/h]</span>
<span class="t" id="t67" style="left:37px;top:270px;font-size:11.6px;line-height:14px;color:#222;font-weight:700;letter-spacing:-0.053px;transform:translate(0.80px,0.35px) rotate(0.12deg)">0</span>
<span class="t" id="t68" style="left:101px;top:270px;font-size:11.6px;line-height:14px;color:#222;font-weight:700;letter-spacing:-0.153px;transform:translate(0.30px,0.35px) rotate(0.12deg)">0</span>
<span class="t" id="t69" style="left:173px;top:270px;font-size:11.6px;line-height:14px;color:#222;font-weight:700;letter-spacing:-0.153px;transform:translate(0.80px,0.35px) rotate(0.12deg)">0</span>
<span class="t" id="t70" style="left:240px;top:270px;font-size:11.6px;line-height:14px;color:#222;font-weight:700;letter-spacing:-0.053px;transform:translate(0.10px,0.35px) rotate(0.12deg)">0</span>
<span class="t" id="t71" style="left:299px;top:270px;font-size:11.6px;line-height:14px;color:#222;font-weight:700;letter-spacing:0.057px;transform:translate(0.50px,0.35px) rotate(0.12deg)">120.2</span>
<span class="t" id="t72" style="left:377px;top:270px;font-size:11.6px;line-height:14px;color:#222;font-weight:700;letter-spacing:0.058px;transform:translate(0.00px,0.35px) rotate(0.12deg)">8.3</span>
<span class="t" id="t73" style="left:431px;top:270px;font-size:11.6px;line-height:14px;color:#222;font-weight:700;letter-spacing:0.025px;transform:translate(0.80px,0.35px) rotate(0.12deg)">0.3</span>
<span class="t" id="t74" style="left:477px;top:270px;font-size:11.6px;line-height:14px;color:#222;font-weight:700;letter-spacing:-0.208px;transform:translate(0.80px,0.35px) rotate(0.12deg)">0.1</span>
<span class="t" id="t75" style="left:542px;top:270px;font-size:11.6px;line-height:14px;color:#222;font-weight:700;letter-spacing:-0.053px;transform:translate(0.90px,0.35px) rotate(0.12deg)">0</span>
<span class="t" id="t76" style="left:629px;top:270px;font-size:11.6px;line-height:14px;color:#222;font-weight:700;letter-spacing:0.047px;transform:translate(0.00px,0.35px) rotate(0.12deg)">0</span>
<span class="t" id="t77" style="left:13px;top:296px;font-size:7.6px;line-height:11px;color:#111;font-weight:700;transform-origin:0 50%;transform:translate(0.90px,0.22px) rotate(0.12deg) scaleX(0.907)">FPS</span>
<span class="t" id="t78" style="left:585px;top:296px;font-size:6.5px;line-height:9px;color:#444;letter-spacing:0.062px;transform:translate(0.30px,0.93px) rotate(0.12deg)">FPS(&gt;=)</span>
<span class="t" id="t79" style="left:625px;top:297px;font-size:6.0px;line-height:8px;color:#444;letter-spacing:-0.144px;transform:translate(0.80px,0.75px) rotate(0.12deg)">18</span>
<span class="t" id="t80" style="left:659px;top:297px;font-size:6.0px;line-height:8px;color:#444;letter-spacing:-0.144px;transform:translate(0.70px,0.75px) rotate(0.12deg)">25</span>
<span class="t" id="t81" style="left:687px;top:297px;font-size:5.8px;line-height:8px;color:#4a6cf7;letter-spacing:-0.105px;transform:translate(0.20px,0.84px) rotate(0.12deg)">重置</span>
<span class="t" id="t82" style="left:356px;top:314px;font-size:7.0px;line-height:9px;color:#fff;transform-origin:0 50%;transform:translate(0.60px,0.01px) rotate(0.12deg) scaleX(0.936)">label1</span>
<span class="t" id="t83" style="left:24px;top:441px;font-size:6.0px;line-height:8px;color:#4a4a4a;transform-origin:0 50%;transform:translate(0.03px,0.15px) rotate(0.12deg) scaleX(0.918)">0</span>
<span class="t" id="t84" style="left:20px;top:431px;font-size:6.0px;line-height:8px;color:#4a4a4a;transform-origin:0 50%;transform:translate(0.96px,0.19px) rotate(0.12deg) scaleX(0.918)">12</span>
<span class="t" id="t85" style="left:20px;top:421px;font-size:6.0px;line-height:8px;color:#4a4a4a;transform-origin:0 50%;transform:translate(0.96px,0.24px) rotate(0.12deg) scaleX(0.918)">24</span>
<span class="t" id="t86" style="left:20px;top:411px;font-size:6.0px;line-height:8px;color:#4a4a4a;transform-origin:0 50%;transform:translate(0.96px,0.28px) rotate(0.12deg) scaleX(0.918)">36</span>
<span class="t" id="t87" style="left:20px;top:401px;font-size:6.0px;line-height:8px;color:#4a4a4a;transform-origin:0 50%;transform:translate(0.96px,0.33px) rotate(0.12deg) scaleX(0.918)">48</span>
<span class="t" id="t88" style="left:20px;top:391px;font-size:6.0px;line-height:8px;color:#4a4a4a;transform-origin:0 50%;transform:translate(0.96px,0.37px) rotate(0.12deg) scaleX(0.918)">60</span>
<span class="t" id="t89" style="left:20px;top:381px;font-size:6.0px;line-height:8px;color:#4a4a4a;transform-origin:0 50%;transform:translate(0.96px,0.42px) rotate(0.12deg) scaleX(0.918)">72</span>
<span class="t" id="t90" style="left:20px;top:371px;font-size:6.0px;line-height:8px;color:#4a4a4a;transform-origin:0 50%;transform:translate(0.96px,0.46px) rotate(0.12deg) scaleX(0.918)">84</span>
<span class="t" id="t91" style="left:20px;top:361px;font-size:6.0px;line-height:8px;color:#4a4a4a;transform-origin:0 50%;transform:translate(0.96px,0.51px) rotate(0.12deg) scaleX(0.918)">96</span>
<span class="t" id="t92" style="left:17px;top:351px;font-size:6.0px;line-height:8px;color:#4a4a4a;transform-origin:0 50%;transform:translate(0.89px,0.55px) rotate(0.12deg) scaleX(0.920)">109</span>
<span class="t" id="t93" style="left:17px;top:341px;font-size:6.0px;line-height:8px;color:#4a4a4a;transform-origin:0 50%;transform:translate(0.89px,0.60px) rotate(0.12deg) scaleX(0.920)">121</span>
<span class="t" id="t94" style="left:17px;top:331px;font-size:6.0px;line-height:8px;color:#4a4a4a;transform-origin:0 50%;transform:translate(0.89px,0.64px) rotate(0.12deg) scaleX(0.920)">133</span>
<span class="t" id="t95" style="left:4px;top:392px;font-size:5.7px;line-height:8px;color:#222;font-weight:700;transform:translate(0.57px,0.10px) rotate(-90deg) scaleX(0.805)">FPS</span>
<span class="t" id="t96" style="left:704px;top:331px;font-size:6.0px;line-height:8px;color:#666;transform-origin:0 50%;transform:translate(0.50px,0.75px) rotate(0.12deg) scaleX(0.837)">2</span>
<span class="t" id="t97" style="left:704px;top:386px;font-size:6.0px;line-height:8px;color:#666;transform-origin:0 50%;transform:translate(0.50px,0.55px) rotate(0.12deg) scaleX(0.837)">1</span>
<span class="t" id="t98" style="left:704px;top:441px;font-size:6.0px;line-height:8px;color:#666;transform-origin:0 50%;transform:translate(0.50px,0.05px) rotate(0.12deg) scaleX(0.837)">0</span>
<span class="t" id="t99" style="left:707px;top:380px;font-size:5.8px;line-height:8px;color:#222;font-weight:700;transform:translate(0.69px,0.00px) rotate(90deg) scaleX(0.908)">Jank</span>
<span class="t" id="t100" style="left:32px;top:448px;font-size:5.9px;line-height:8px;color:#4a4a4a;letter-spacing:-0.030px;transform:translate(0.00px,0.76px) rotate(0.12deg)">00:00</span>
<span class="t" id="t101" style="left:61px;top:448px;font-size:5.9px;line-height:8px;color:#4a4a4a;transform-origin:0 50%;transform:translate(0.22px,0.76px) rotate(0.12deg) scaleX(0.936)">00:50</span>
<span class="t" id="t102" style="left:96px;top:448px;font-size:5.9px;line-height:8px;color:#4a4a4a;transform-origin:0 50%;transform:translate(0.74px,0.76px) rotate(0.12deg) scaleX(0.936)">01:40</span>
<span class="t" id="t103" style="left:132px;top:448px;font-size:5.9px;line-height:8px;color:#4a4a4a;transform-origin:0 50%;transform:translate(0.26px,0.76px) rotate(0.12deg) scaleX(0.936)">02:30</span>
<span class="t" id="t104" style="left:167px;top:448px;font-size:5.9px;line-height:8px;color:#4a4a4a;transform-origin:0 50%;transform:translate(0.78px,0.76px) rotate(0.12deg) scaleX(0.936)">03:20</span>
<span class="t" id="t105" style="left:203px;top:448px;font-size:5.9px;line-height:8px;color:#4a4a4a;transform-origin:0 50%;transform:translate(0.30px,0.76px) rotate(0.12deg) scaleX(0.936)">04:10</span>
<span class="t" id="t106" style="left:238px;top:448px;font-size:5.9px;line-height:8px;color:#4a4a4a;transform-origin:0 50%;transform:translate(0.82px,0.76px) rotate(0.12deg) scaleX(0.936)">05:00</span>
<span class="t" id="t107" style="left:274px;top:448px;font-size:5.9px;line-height:8px;color:#4a4a4a;transform-origin:0 50%;transform:translate(0.34px,0.76px) rotate(0.12deg) scaleX(0.936)">05:50</span>
<span class="t" id="t108" style="left:309px;top:448px;font-size:5.9px;line-height:8px;color:#4a4a4a;transform-origin:0 50%;transform:translate(0.86px,0.76px) rotate(0.12deg) scaleX(0.936)">06:40</span>
<span class="t" id="t109" style="left:345px;top:448px;font-size:5.9px;line-height:8px;color:#4a4a4a;transform-origin:0 50%;transform:translate(0.38px,0.76px) rotate(0.12deg) scaleX(0.936)">07:30</span>
<span class="t" id="t110" style="left:380px;top:448px;font-size:5.9px;line-height:8px;color:#4a4a4a;transform-origin:0 50%;transform:translate(0.90px,0.76px) rotate(0.12deg) scaleX(0.936)">08:20</span>
<span class="t" id="t111" style="left:416px;top:448px;font-size:5.9px;line-height:8px;color:#4a4a4a;transform-origin:0 50%;transform:translate(0.42px,0.76px) rotate(0.12deg) scaleX(0.936)">09:10</span>
<span class="t" id="t112" style="left:451px;top:448px;font-size:5.9px;line-height:8px;color:#4a4a4a;transform-origin:0 50%;transform:translate(0.94px,0.76px) rotate(0.12deg) scaleX(0.936)">10:00</span>
<span class="t" id="t113" style="left:487px;top:448px;font-size:5.9px;line-height:8px;color:#4a4a4a;transform-origin:0 50%;transform:translate(0.46px,0.76px) rotate(0.12deg) scaleX(0.936)">10:50</span>
<span class="t" id="t114" style="left:522px;top:448px;font-size:5.9px;line-height:8px;color:#4a4a4a;letter-spacing:-0.103px;transform:translate(0.98px,0.76px) rotate(0.12deg)">11:40</span>
<span class="t" id="t115" style="left:558px;top:448px;font-size:5.9px;line-height:8px;color:#4a4a4a;transform-origin:0 50%;transform:translate(0.50px,0.76px) rotate(0.12deg) scaleX(0.936)">12:30</span>
<span class="t" id="t116" style="left:594px;top:448px;font-size:5.9px;line-height:8px;color:#4a4a4a;transform-origin:0 50%;transform:translate(0.02px,0.76px) rotate(0.12deg) scaleX(0.936)">13:20</span>
<span class="t" id="t117" style="left:629px;top:448px;font-size:5.9px;line-height:8px;color:#4a4a4a;transform-origin:0 50%;transform:translate(0.54px,0.76px) rotate(0.12deg) scaleX(0.936)">14:10</span>
<span class="t" id="t118" style="left:665px;top:448px;font-size:5.9px;line-height:8px;color:#4a4a4a;transform-origin:0 50%;transform:translate(0.06px,0.76px) rotate(0.12deg) scaleX(0.936)">15:00</span>
<span class="t" id="t119" style="left:216px;top:469px;font-size:5.4px;line-height:8px;color:#444;transform-origin:0 50%;transform:translate(0.20px,0.68px) rotate(0.12deg) scaleX(0.897)">FPS</span>
<span class="t" id="t120" style="left:246px;top:469px;font-size:5.7px;line-height:8px;color:#444;letter-spacing:0.165px;transform:translate(0.60px,0.79px) rotate(0.12deg)">Smooth</span>
<span class="t" id="t121" style="left:288px;top:469px;font-size:5.7px;line-height:8px;color:#444;transform-origin:0 50%;transform:translate(0.50px,0.79px) rotate(0.12deg) scaleX(0.925)">1%Low(FPS)</span>
<span class="t" id="t122" style="left:341px;top:469px;font-size:5.7px;line-height:8px;color:#444;letter-spacing:-0.028px;transform:translate(0.00px,0.79px) rotate(0.12deg)">SmallJank</span>
<span class="t" id="t123" style="left:388px;top:469px;font-size:5.7px;line-height:8px;color:#444;transform-origin:0 50%;transform:translate(0.00px,0.79px) rotate(0.12deg) scaleX(0.915)">Jank</span>
<span class="t" id="t124" style="left:420px;top:469px;font-size:5.7px;line-height:8px;color:#444;letter-spacing:-0.105px;transform:translate(0.50px,0.79px) rotate(0.12deg)">BigJank</span>
<span class="t" id="t125" style="left:461px;top:469px;font-size:5.7px;line-height:8px;color:#444;letter-spacing:0.105px;transform:translate(0.00px,0.79px) rotate(0.12deg)">Stutter</span>
<span class="t" id="t126" style="left:500px;top:469px;font-size:5.7px;line-height:8px;color:#444;letter-spacing:0.017px;transform:translate(0.00px,0.79px) rotate(0.12deg)">InterFrame</span>
<span class="t" id="t127" style="left:663px;top:470px;font-size:5.7px;line-height:8px;color:#4a6cf7;letter-spacing:-0.254px;transform:translate(0.70px,0.20px) rotate(0.12deg)">全隐藏</span>
<span class="t" id="t128" style="left:65px;top:71px;font-size:9.2px;line-height:12px;color:rgba(120,125,150,.17);letter-spacing:0.212px;transform:translate(0.10px,0.60px) rotate(-21deg)">PerfDog</span>
<span class="t" id="t129" style="left:249px;top:71px;font-size:9.2px;line-height:12px;color:rgba(120,125,150,.17);letter-spacing:0.212px;transform:translate(0.10px,0.60px) rotate(-21deg)">PerfDog</span>
<span class="t" id="t130" style="left:431px;top:71px;font-size:9.2px;line-height:12px;color:rgba(120,125,150,.17);letter-spacing:0.212px;transform:translate(0.10px,0.60px) rotate(-21deg)">PerfDog</span>
<span class="t" id="t131" style="left:614px;top:71px;font-size:9.2px;line-height:12px;color:rgba(120,125,150,.17);letter-spacing:0.212px;transform:translate(0.10px,0.60px) rotate(-21deg)">PerfDog</span>
<span class="t" id="t132" style="left:65px;top:231px;font-size:9.2px;line-height:12px;color:rgba(120,125,150,.17);letter-spacing:0.212px;transform:translate(0.10px,0.60px) rotate(-21deg)">PerfDog</span>
<span class="t" id="t133" style="left:249px;top:231px;font-size:9.2px;line-height:12px;color:rgba(120,125,150,.17);letter-spacing:0.212px;transform:translate(0.10px,0.60px) rotate(-21deg)">PerfDog</span>
<span class="t" id="t134" style="left:431px;top:231px;font-size:9.2px;line-height:12px;color:rgba(120,125,150,.17);letter-spacing:0.212px;transform:translate(0.10px,0.60px) rotate(-21deg)">PerfDog</span>
<span class="t" id="t135" style="left:614px;top:231px;font-size:9.2px;line-height:12px;color:rgba(120,125,150,.17);letter-spacing:0.212px;transform:translate(0.10px,0.60px) rotate(-21deg)">PerfDog</span>
<span class="t" id="t136" style="left:65px;top:391px;font-size:9.2px;line-height:12px;color:rgba(120,125,150,.17);letter-spacing:0.212px;transform:translate(0.10px,0.60px) rotate(-21deg)">PerfDog</span>
<span class="t" id="t137" style="left:249px;top:391px;font-size:9.2px;line-height:12px;color:rgba(120,125,150,.17);letter-spacing:0.212px;transform:translate(0.10px,0.60px) rotate(-21deg)">PerfDog</span>
<span class="t" id="t138" style="left:431px;top:391px;font-size:9.2px;line-height:12px;color:rgba(120,125,150,.17);letter-spacing:0.212px;transform:translate(0.10px,0.60px) rotate(-21deg)">PerfDog</span>
<span class="t" id="t139" style="left:614px;top:391px;font-size:9.2px;line-height:12px;color:rgba(120,125,150,.17);letter-spacing:0.212px;transform:translate(0.10px,0.60px) rotate(-21deg)">PerfDog</span>
</body>
</html>
